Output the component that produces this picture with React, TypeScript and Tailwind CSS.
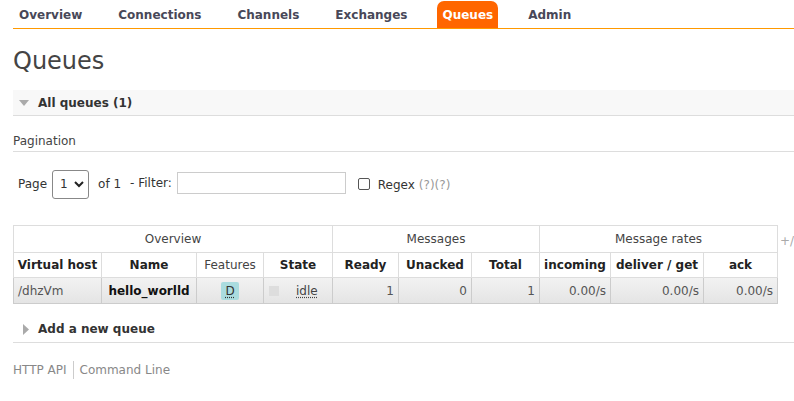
import React from "react";

const tabs = ["Overview", "Connections", "Channels", "Exchanges", "Queues", "Admin"];

function Tri({ down }: { down?: boolean }) {
  return down ? (
    <svg width="10" height="6" viewBox="0 0 10 6" className="block">
      <path d="M0 0 L10 0 L5 6 Z" fill="#aaa" />
    </svg>
  ) : (
    <svg width="6" height="11" viewBox="0 0 6 11" className="block">
      <path d="M0 0 L6 5.5 L0 11 Z" fill="#aaa" />
    </svg>
  );
}

const th1 = "border border-[#ddd] font-normal text-[#444] h-[27px] text-center";
const th2 = "border border-[#ddd] font-bold text-[#222] h-[25px] text-center";
const td = "border border-[#ccc] h-[26px] px-[4px]";

export default function App() {
  return (
    <div className="min-h-[401px] bg-white text-[12px] text-[#444]" style={{ fontFamily: '"DejaVu Sans", Verdana, sans-serif' }}>
      {/* tabs */}
      <ul className="ml-[13px] flex gap-[24px] border-b border-[#f90] pt-[1px]">
        {tabs.map((t) => (
          <li
            key={t}
            className={
              t === "Queues"
                ? "h-[27px] px-[5px] flex items-center font-bold text-white bg-[#f60] rounded-t-[7px]"
                : "h-[27px] px-[6px] flex items-center font-bold text-[#484858]"
            }
          >
            {t}
          </li>
        ))}
      </ul>

      <div className="pl-[13px]">
        <h1 className="text-[24px] leading-[30px] mt-[17px] text-[#444]">Queues</h1>

        <div className="mt-[14px] h-[26px] bg-[#f8f8f8] border-b border-[#ddd] flex items-center">
          <div className="ml-[6px] w-[19px]">
            <Tri down />
          </div>
          <span className="font-bold text-[#333]">All queues (1)</span>
        </div>

        <div className="mt-[18px] border-b border-[#ddd] pb-[3px] leading-[14px]">Pagination</div>

        <div className="flex items-center mt-[17px] h-[30px] text-[#333]">
          <span className="ml-[5px]">Page</span>
          <div className="ml-[5px] w-[37px] h-[29px] border border-[#888] rounded-[3px] flex items-center pl-[7px] gap-[6px]">
            <span>1</span>
            <svg width="10" height="7" viewBox="0 0 10 7">
              <path d="M1 1 L5 5 L9 1" stroke="#222" strokeWidth="2" fill="none" />
            </svg>
          </div>
          <span className="ml-[9px]">of 1</span>
          <span className="ml-[9px] -mt-[3px]">- Filter:</span>
          <div className="ml-[5px] -mt-[3px] w-[169px] h-[22px] border border-[#ccc]" />
          <div className="ml-[12px] w-[12px] h-[12px] border border-[#555] rounded-[2px]" />
          <span className="ml-[8px] mt-[2px]">Regex</span>
          <span className="ml-[4px] mt-[2px] text-[#999]">(?)(?)</span>
        </div>

        <div className="flex mt-[26px]">
          <table className="table-fixed border-collapse w-[764px]">
            <colgroup>
              <col className="w-[88px]" />
              <col className="w-[95px]" />
              <col className="w-[67px]" />
              <col className="w-[69px]" />
              <col className="w-[66px]" />
              <col className="w-[73px]" />
              <col className="w-[68px]" />
              <col className="w-[71px]" />
              <col className="w-[93px]" />
              <col className="w-[74px]" />
            </colgroup>
            <thead>
              <tr>
                <th colSpan={4} className={th1}>Overview</th>
                <th colSpan={3} className={th1}>Messages</th>
                <th colSpan={3} className={th1}>Message rates</th>
              </tr>
              <tr>
                <th className={th2}>Virtual host</th>
                <th className={th2}>Name</th>
                <th className={th2 + " !font-normal !text-[#444]"}>Features</th>
                <th className={th2}>State</th>
                <th className={th2}>Ready</th>
                <th className={th2}>Unacked</th>
                <th className={th2}>Total</th>
                <th className={th2}>incoming</th>
                <th className={th2}>deliver / get</th>
                <th className={th2}>ack</th>
              </tr>
            </thead>
            <tbody>
              <tr className="bg-gradient-to-b from-[#f2f2f2] to-[#e4e4e4] text-[#555]">
                <td className={td + " text-left"}>/dhzVm</td>
                <td className={td + " text-center font-bold text-[#111]"}>hello_worlld</td>
                <td className={td + " text-center"}>
                  <span className="inline-flex w-[18px] h-[18px] items-center justify-center bg-[#aadcdf] rounded-[2px] text-[#333] underline decoration-dotted underline-offset-2">
                    D
                  </span>
                </td>
                <td className={td}>
                  <div className="flex items-center">
                    <span className="w-[10px] h-[10px] bg-[#ddd] ml-[1px]" />
                    <span className="ml-[17px] text-[#444] underline decoration-dotted underline-offset-2">idle</span>
                  </div>
                </td>
                <td className={td + " text-right"}>1</td>
                <td className={td + " text-right"}>0</td>
                <td className={td + " text-right"}>1</td>
                <td className={td + " text-right"}>0.00/s</td>
                <td className={td + " text-right"}>0.00/s</td>
                <td className={td + " text-right"}>0.00/s</td>
              </tr>
            </tbody>
          </table>
          <span className="ml-[2px] mt-[7px] text-[#aaa]">+/</span>
        </div>

        <div className="mt-[12px] h-[27px] border-b border-[#ddd] flex items-center">
          <div className="ml-[10px] w-[15px]">
            <Tri />
          </div>
          <span className="font-bold text-[#333]">Add a new queue</span>
        </div>

        <div className="mt-[18px] flex items-center text-[#888]">
          <span>HTTP API</span>
          <span className="mx-[6px] w-px h-[18px] bg-[#ccc]" />
          <span>Command Line</span>
        </div>
      </div>
    </div>
  );
}
